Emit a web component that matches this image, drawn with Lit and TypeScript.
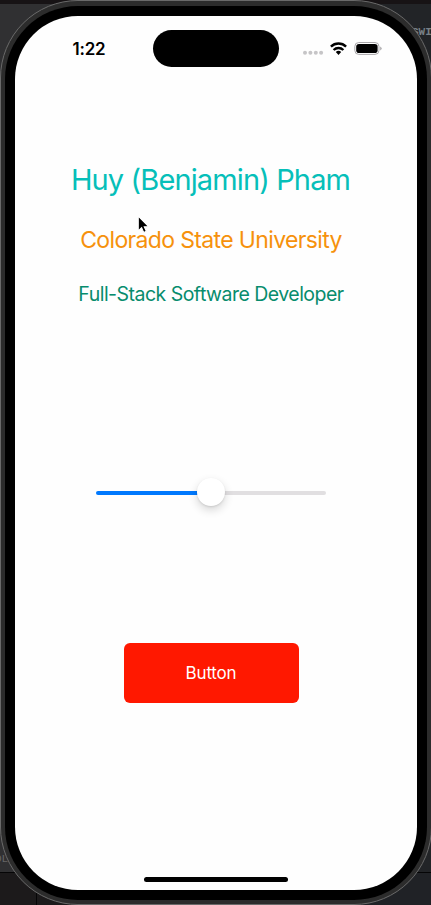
import { LitElement, html, css } from "lit";
import { customElement, property } from "lit/decorators.js";

@customElement("value-slider")
class ValueSlider extends LitElement {
  @property({ type: Number }) value = 50;
  static styles = css`
    :host { display: block; width: 230px; height: 28px; }
    .row { display: flex; align-items: center; height: 28px; }
    .fill { height: 4px; border-radius: 2px 0 0 2px; background: #0079fe; margin-top: 2px; }
    .rest { flex: 1; height: 4px; border-radius: 0 2px 2px 0; background: #e1dfe1; margin-top: 2px; }
    .thumb { flex: none; width: 28px; height: 28px; margin: 0 -14px; border-radius: 50%; background: #fff; z-index: 1;
      box-shadow: 0 4px 10px rgba(0,0,0,.16), 0 1px 2px rgba(0,0,0,.1); }
  `;
  render() {
    return html`<div class="row">
      <div class="fill" style="width:${this.value}%"></div>
      <div class="thumb"></div>
      <div class="rest"></div>
    </div>`;
  }
}

@customElement("status-bar")
class StatusBar extends LitElement {
  static styles = css`
    :host { display: flex; justify-content: space-between; align-items: flex-start; height: 51px; padding: 14px 35px 0 57px; box-sizing: border-box; }
    .time { width: 81px; font: 600 17px/20px Inter, sans-serif; padding: 9px 0 0 1px; box-sizing: border-box; letter-spacing: -.2px; color: #000; }
    .island { width: 126px; height: 37px; border-radius: 19px; background: #000; }
    .icons { width: 103px; height: 37px; }
    svg { display: block; }
  `;
  render() {
    return html`
      <div class="time">1:22</div>
      <div class="island"></div>
      <svg class="icons" viewBox="279 30 103 37">
        <g fill="#c6c5c7">
          <circle cx="305" cy="52.8" r="2"/><circle cx="310.4" cy="52.8" r="2"/>
          <circle cx="315.8" cy="52.8" r="2"/><circle cx="321.1" cy="52.8" r="2"/>
        </g>
        <g fill="none" stroke="#000" stroke-width="2.4">
          <path d="M330.9 46.6a11 11 0 0 1 15.2 0"/>
          <path d="M333.6 50a7 7 0 0 1 9.8 0"/>
        </g>
        <path d="M335.8 52.1a4 4 0 0 1 5.4 0L338.5 55Z"/>
        <rect x="354.8" y="42.5" width="24.2" height="11.9" rx="4" fill="none" stroke="#a9a7aa"/>
        <rect x="356.2" y="43.9" width="21.4" height="9.1" rx="2.8"/>
        <path d="M380.2 46.4q3 2 0 4Z" fill="#a9a7aa"/>
      </svg>`;
  }
}

@customElement("app-root")
class AppRoot extends LitElement {
  static styles = css`
    * { box-sizing: border-box; }
    :host { display: block; position: relative; width: 431px; height: 905px; overflow: hidden; font-family: Inter, sans-serif;
      background: linear-gradient(90deg, #303032 0 50%, #222427 50%); }
    .editor { position: absolute; inset: 0; font: bold 11px/12px "Liberation Mono", monospace; color: #778087; }
    .top { position: absolute; left: 0; top: 0; width: 100%; height: 4px; background: #171315; }
    .tag { position: absolute; left: 412px; top: 26px; }
    .side { position: absolute; left: -5px; top: 853px; color: #666; font-weight: 400; }
    .bottom { position: absolute; left: 0; top: 872px; width: 100%; height: 33px; border-top: 1px solid #050506; background: linear-gradient(90deg, #1c1a1b 0 36px, #050506 36px 37px, #1c1a1b 37px 50%, #202226 50%); }
    .frame { position: relative; width: 432px; height: 905px; border: 1px solid #6a6a6a; border-radius: 78px; padding: 5px 4px 4px; background: #2c2c2c; margin-left: -.5px; }
    .bezel { height: 894px; border-radius: 73px; padding: 10px; background: #000; }
    .screen { height: 874px; border-radius: 63px; background: #fefefe; display: flex; flex-direction: column; align-items: center; overflow: hidden; }
    status-bar { width: 402px; flex: none; }
    .line { white-space: nowrap; text-align: center; margin-right: 9px; }
    .name { margin-top: 95px; margin-right: 10px; font-size: 29px; line-height: 36px; letter-spacing: -.87px; color: #06bfb9; }
    .school { margin-top: 27px; font-size: 23px; line-height: 30px; letter-spacing: -.65px; color: #f6910c; }
    .role { margin-top: 26px; font-size: 19.5px; line-height: 26px; letter-spacing: -.52px; color: #078c6d; }
    value-slider { margin: 171px 10px 0 0; flex: none; }
    button { width: 175px; height: 60px; margin: 137px 9px 0 0; border: 0; border-radius: 6px; background: #ff1800; color: #fff; font: 400 17px/22px Inter, sans-serif; letter-spacing: -.2px; flex: none; padding-top: 1px; }
    .home { width: 144px; height: 5px; border-radius: 3px; background: #000; margin-top: auto; margin-bottom: 8px; flex: none; }
    .cursor { position: absolute; left: 135px; top: 213px; }
  `;
  render() {
    return html`
      <div class="editor">
        <div class="top"></div><div class="tag">SWI</div>
        <div class="side">OL</div><div class="bottom"></div>
      </div>
      <div class="frame"><div class="bezel"><div class="screen">
        <status-bar></status-bar>
        <div class="line name">Huy (Benjamin) Pham</div>
        <div class="line school">Colorado State University</div>
        <div class="line role">Full-Stack Software Developer</div>
        <value-slider .value=${50}></value-slider>
        <button>Button</button>
        <div class="home"></div>
      </div></div></div>
      <svg class="cursor" width="17" height="23" viewBox="0 0 16 22">
        <path d="M3 3v14l3.2-3 2 4.6 2.5-1.1-2-4.4h4.2Z" fill="#000" stroke="#fff" stroke-width="1"/>
      </svg>`;
  }
}
